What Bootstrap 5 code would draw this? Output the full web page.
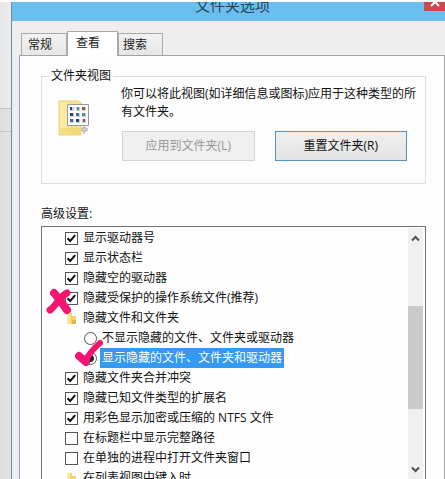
<!DOCTYPE html>
<html lang="zh-CN">
<head>
<meta charset="utf-8">
<meta name="viewport" content="width=device-width, initial-scale=1">
<title>文件夹选项</title>
<link href="https://cdn.jsdelivr.net/npm/bootstrap@5.3.0/dist/css/bootstrap.min.css" rel="stylesheet">
<style>
body{font:12px/18px "Open Sans","Noto Sans CJK SC",sans-serif;color:#111;background:#fcfcfc;padding-top:2px}
.desk{width:11px;background:linear-gradient(90deg,#dedede,#e4e2e3);flex:none}
.desk-top{height:107px;border-bottom:1px solid #c2c2c2;background:linear-gradient(90deg,#e6e6e6,#ededee)}
.desk-mid{height:23px;border-bottom:1px solid #c6c6c6}
.dialog{border-left:1px solid #6b8ea3;background:#e9edf5;min-width:0}
.titlebar{height:19px;background:#6bbfee;color:#20465c}
.titlebar h1{font-size:15px;line-height:20px;margin:-7px 0 0 8px}
.close-btn{width:21px;height:9px;background:#d0484c;top:0;right:0}
.tabband{background:#eee;height:34px;padding-left:9px}
.tabband .nav-link{height:22px;padding:0 6px;line-height:21px;color:#222;border:1px solid #aaa;border-bottom:0;border-radius:0;background:linear-gradient(#f2f2f2,#e6e6e6)}
.tabband .t1{width:46px}.tabband .t3{width:45px;padding:0 4px}
.tabband .nav-link.active{width:51px;height:25px;padding:0 8px;background:#fff;margin-bottom:-1px;position:relative;z-index:1}
.sheet{margin-left:7px;border:1px solid #a3a3a3;border-bottom:0;background:#fdfdfd;padding:11px 18px 0 21px;min-height:0}
.group{border:1px solid #ddd;padding:0 7px 22px 16px}
.group legend{font-size:12px;line-height:18px;width:auto;float:none;padding:0 2px;margin:0 0 0 -9px}
.folder-art{width:32px;height:40px;flex:none;margin-top:13px}
.group-body{padding-left:31px}
.dlg-btn{flex:1;max-width:200px;height:30px;font:inherit;padding:0;border-radius:0;color:#111;border:1px solid #5393c8;background:linear-gradient(#efefef,#e3e3e3)}
.dlg-btn:disabled{color:#999;border-color:#d4d4d4;background:#efefef;opacity:1}
.btnrow{gap:20px;margin:10px 11px 0 1px}
.adv{font-size:12px;line-height:18px;margin:21px 0 3px}
.listbox{border:1px solid #737373;border-bottom:0;background:#fefefe;min-height:0}
.tree{padding:1px 0 0 23px;min-width:0}
.tree li{height:20px;display:flex;align-items:center;white-space:nowrap}
.tree label,.tree .cap{line-height:20px;padding-left:5px}
.tree .sub{padding-left:19px}
.tree .sub label{margin-left:3px;padding:0 2px}
.tree .picked{background:#3399f3;color:#fff}
.tree .form-check-input{width:13px;height:13px;margin:0;flex:none;border:1px solid #555;background-color:#fff}
.tree input[type=checkbox]{border-radius:0}
.tree .form-check-input:checked[type=checkbox]{background-size:13px;background-image:url("data:image/svg+xml,%3Csvg xmlns='http://www.w3.org/2000/svg' viewBox='0 0 13 13'%3E%3Cpath d='M2.500 6.200 5.200 9 10.200 3.200' fill='none' stroke='%23111' stroke-width='2'/%3E%3C/svg%3E")}
.tree .form-check-input:checked[type=radio]{background-image:radial-gradient(#222 0 3px,#fff 4px);background-size:100%}
.mini{width:13px;height:13px;flex:none}
.ink{fill:none;stroke:#f3156f;stroke-linecap:round;stroke-linejoin:round;position:absolute;pointer-events:none}
.ink-x{left:4px;top:61px;width:32px;height:30px}
.ink-v{left:32px;top:108px;width:32px;height:38px}
.scroller{width:15px;margin:1px 2px 0 0;background:#f0f0f0;flex:none}
.scroller button{border:0;padding:0;background:none;height:20px;line-height:0}
.scroller .thumb{flex:0 0 41%;background:#cacaca}
.scroller .above{flex:0 0 23%}
</style>
<script src="https://cdn.jsdelivr.net/npm/bootstrap@5.3.0/dist/js/bootstrap.bundle.min.js"></script>
</head>
<body class="d-flex vh-100 overflow-hidden">
<div class="desk"><div class="desk-top"></div><div class="desk-mid"></div></div>
<main class="dialog d-flex flex-column flex-grow-1">
  <header class="titlebar position-relative overflow-hidden text-center flex-shrink-0">
    <h1 class="fw-normal">文件夹选项</h1>
    <button class="close-btn position-absolute border-0 p-0 d-flex justify-content-center" aria-label="关闭"><svg width="10" height="5" viewBox="0 0 10 5"><path d="M1 4 5 0 9 4" fill="none" stroke="#fff" stroke-width="2"/></svg></button>
  </header>
  <nav class="tabband nav d-flex align-items-end flex-nowrap flex-shrink-0">
    <a class="nav-link t1" href="#">常规</a>
    <a class="nav-link active" href="#" aria-current="page">查看</a>
    <a class="nav-link t3" href="#">搜索</a>
  </nav>
  <section class="sheet d-flex flex-column flex-grow-1">
    <fieldset class="group flex-shrink-0">
      <legend>文件夹视图</legend>
      <div class="d-flex">
        <svg class="folder-art" viewBox="0 0 32 40">
          <path d="M1 3H20L23 5V37H1Z" fill="#f6e28a" stroke="#ead37a"/><path d="M2 4H10V36H2Z" fill="#f9eba0"/><path d="M2 30H22V36H2Z" fill="#f0d56f" opacity=".6"/>
          <path d="M26 26V30M24 30H29V33H24ZM26 33V36" fill="#ddd" stroke="#aaa"/>
          <path d="M9.500 6.500H30.500V27.500H9.500Z" fill="#fcfcfc" stroke="#999"/>
          <path d="M12 9h4v4h-4zM18 9h4v4h-4zM24 9h4v4h-4zM12 15h4v4h-4zM18 15h4v4h-4zM24 15h4v4h-4zM12 21h4v4h-4zM18 21h4v4h-4zM24 21h4v4h-4z" fill="#c3d0df"/>
          <path d="M12 9h2v3h-2zM12 15h3v3h-3zM18 21h3v3h-3z" fill="#2b4668"/><path d="M19 9h2v3h-2zM24 15h3v3h-3z" fill="#5c8c6c"/><path d="M24 9h3v3h-3zM25 21h2v3h-2z" fill="#a4533c"/><path d="M18 15h3v3h-3zM12 21h3v3h-3z" fill="#47729f"/>
        </svg>
        <div class="group-body flex-grow-1">
          <p class="m-0">你可以将此视图(如详细信息或图标)应用于这种类型的所有文件夹。</p>
          <div class="btnrow d-flex">
            <button class="btn dlg-btn" disabled>应用到文件夹(L)</button>
            <button class="btn dlg-btn">重置文件夹(R)</button>
          </div>
        </div>
      </div>
    </fieldset>
    <h2 class="adv fw-normal flex-shrink-0" id="adv">高级设置:</h2>
    <div class="listbox d-flex position-relative flex-grow-1">
      <ul class="tree list-unstyled m-0 flex-grow-1 overflow-hidden" aria-labelledby="adv">
        <li><input class="form-check-input" type="checkbox" id="c1" checked><label for="c1">显示驱动器号</label></li>
        <li><input class="form-check-input" type="checkbox" id="c2" checked><label for="c2">显示状态栏</label></li>
        <li><input class="form-check-input" type="checkbox" id="c3" checked><label for="c3">隐藏空的驱动器</label></li>
        <li><input class="form-check-input" type="checkbox" id="c4" checked><label for="c4">隐藏受保护的操作系统文件(推荐)</label></li>
        <li><svg class="mini" viewBox="0 0 13 13"><path d="M2 1H7V4H11V12H2Z" fill="#f1d56f"/><path d="M2 1H5V12H2Z" fill="#f8eaa5"/><path d="M7 8H11V12H7Z" fill="#d9b64d"/></svg><span class="cap">隐藏文件和文件夹</span></li>
        <li class="sub"><input class="form-check-input" type="radio" name="hid" id="r1"><label for="r1">不显示隐藏的文件、文件夹或驱动器</label></li>
        <li class="sub"><input class="form-check-input" type="radio" name="hid" id="r2" checked><label class="picked" for="r2">显示隐藏的文件、文件夹和驱动器</label></li>
        <li><input class="form-check-input" type="checkbox" id="c5" checked><label for="c5">隐藏文件夹合并冲突</label></li>
        <li><input class="form-check-input" type="checkbox" id="c6" checked><label for="c6">隐藏已知文件类型的扩展名</label></li>
        <li><input class="form-check-input" type="checkbox" id="c7" checked><label for="c7">用彩色显示加密或压缩的 NTFS 文件</label></li>
        <li><input class="form-check-input" type="checkbox" id="c8"><label for="c8">在标题栏中显示完整路径</label></li>
        <li><input class="form-check-input" type="checkbox" id="c9"><label for="c9">在单独的进程中打开文件夹窗口</label></li>
        <li><svg class="mini" viewBox="0 0 13 13"><path d="M2 1H7V4H11V12H2Z" fill="#f1d56f"/><path d="M2 1H5V12H2Z" fill="#f8eaa5"/><path d="M7 8H11V12H7Z" fill="#d9b64d"/></svg><span class="cap">在列表视图中键入时</span></li>
      </ul>
      <div class="scroller d-flex flex-column">
        <button aria-label="向上"><svg width="9" height="7" viewBox="0 0 9 7"><path d="M1 5.500 4.500 2 8 5.500" fill="none" stroke="#505050" stroke-width="2"/></svg></button>
        <div class="above"></div><div class="thumb"></div>
        <button class="mt-auto" aria-label="向下"><svg width="9" height="7" viewBox="0 0 9 7"><path d="M1 1.500 4.500 5 8 1.500" fill="none" stroke="#505050" stroke-width="2"/></svg></button>
      </div>
      <svg class="ink ink-x" viewBox="0 0 32 30"><path d="M8 5C12 9 15 14 21 22" stroke-width="8"/><path d="M4 22C10 18 13 9 21 5" stroke-width="7"/></svg>
      <svg class="ink ink-v" viewBox="0 0 32 38"><path d="M5 21 12 27" stroke-width="8"/><path d="M12 27C14 19 20 13 26 8" stroke-width="6"/></svg>
    </div>
  </section>
</main>
</body>
</html>
